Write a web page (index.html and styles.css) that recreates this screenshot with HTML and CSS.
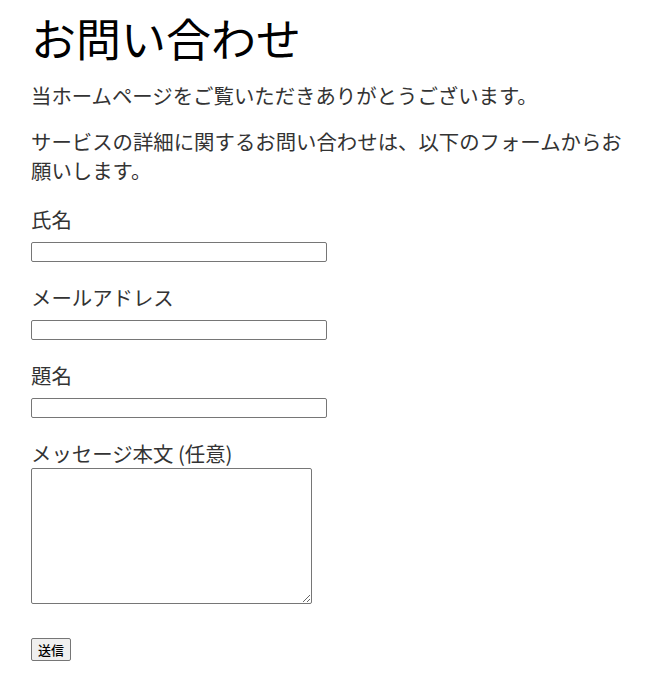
FILE: index.html
```html
<!DOCTYPE html>
<html lang="ja">
<head>
<meta charset="utf-8">
<title>お問い合わせ</title>
<link rel="stylesheet" href="styles.css">
</head>
<body>
<main class="page">
  <h1 class="title">お問い合わせ</h1>
  <p class="text">当ホームページをご覧いただきありがとうございます。</p>
  <p class="text">サービスの詳細に関するお問い合わせは、以下のフォームからお願いします。</p>
  <form class="form">
    <div class="field">
      <label class="label" for="name">氏名</label>
      <input class="input" id="name" type="text">
    </div>
    <div class="field">
      <label class="label" for="mail">メールアドレス</label>
      <input class="input" id="mail" type="email">
    </div>
    <div class="field">
      <label class="label" for="subject">題名</label>
      <input class="input" id="subject" type="text">
    </div>
    <div class="field field-msg">
      <label class="label" for="msg">メッセージ本文 (任意)</label>
      <textarea class="textarea" id="msg"></textarea>
    </div>
    <div class="actions">
      <button class="submit" type="button">送信</button>
    </div>
  </form>
</main>
</body>
</html>
```

FILE: styles.css
```css
html, body {
  margin: 0;
  padding: 0;
  background: #fff;
}
body {
  font-family: "Noto Sans CJK JP", "Noto Sans", sans-serif;
  color: #333;
}
.page {
  padding: 12px 0 0 31px;
  width: 600px;
}
.title {
  margin: 0 0 17px 0;
  font-size: 45px;
  line-height: 52px;
  font-weight: 400;
  color: #000;
}
.text {
  margin: 0 0 17px 0;
  font-size: 20.4px;
  line-height: 29px;
}
.form {
  display: flex;
  flex-direction: column;
  margin-top: 20px;
}
.field {
  display: flex;
  flex-direction: column;
  align-items: flex-start;
  gap: 8px;
  margin-bottom: 21px;
}
.field-msg {
  gap: 0;
  margin-bottom: 32px;
}
.label {
  font-size: 20.4px;
  line-height: 29px;
}
.input {
  box-sizing: border-box;
  width: 296px;
  height: 20px;
  margin: 0;
  padding: 1px 2px;
  border: 1px solid #767676;
  border-radius: 2px;
  background: #fff;
}
.textarea {
  box-sizing: border-box;
  width: 281px;
  height: 136px;
  margin: 0;
  padding: 2px;
  border: 1px solid #767676;
  border-radius: 2px;
  resize: both;
}
.submit {
  box-sizing: border-box;
  height: 23px;
  width: 40px;
  padding: 0;
  margin: 0;
  font-family: "Noto Sans CJK JP", sans-serif;
  font-size: 13px;
  font-weight: 500;
  color: #000;
  background: #efefef;
  border: 1px solid #767676;
  border-radius: 2px;
}
```
